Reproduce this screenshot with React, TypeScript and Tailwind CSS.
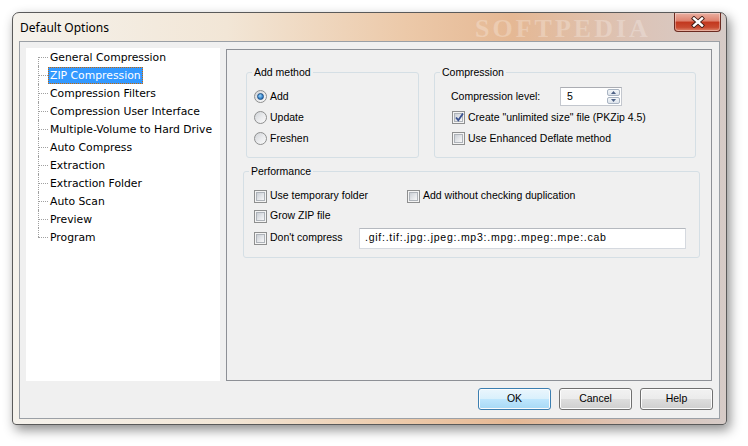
import React from "react";

const treeItems = [
  "General Compression",
  "ZIP Compression",
  "Compression Filters",
  "Compression User Interface",
  "Multiple-Volume to Hard Drive",
  "Auto Compress",
  "Extraction",
  "Extraction Folder",
  "Auto Scan",
  "Preview",
  "Program",
];

function CheckBox({ checked = false }: { checked?: boolean }) {
  return (
    <span className="relative w-[13px] h-[13px] shrink-0 border border-[#8e8f8f] bg-[#f4f4f4] flex items-center justify-center">
      <span className="w-[9px] h-[9px] border border-[#aeb3b9] bg-[linear-gradient(135deg,#cbcfd5_0%,#e4e6e9_55%,#f7f7f7_100%)]" />
      {checked && (
        <svg className="absolute left-[1px] top-[0px]" width="11" height="11" viewBox="0 0 11 11">
          <path d="M2 5.5 L4.3 8.2 L9 1.5" fill="none" stroke="#3a5291" strokeWidth="1.8" strokeLinejoin="miter" />
        </svg>
      )}
    </span>
  );
}

function Radio({ checked = false }: { checked?: boolean }) {
  return (
    <span className="w-[13px] h-[13px] shrink-0 rounded-full border border-[#8e8f8f] bg-[linear-gradient(135deg,#d0d3d7_0%,#ebecee_55%,#fafafa_100%)] flex items-center justify-center">
      {checked && (
        <span className="w-[7px] h-[7px] rounded-full border border-[#1d4f85] bg-[radial-gradient(circle_at_40%_35%,#9fd6f7_0%,#3c8ad0_55%,#1b5a9a_100%)]" />
      )}
    </span>
  );
}

function GroupBox({
  label,
  className,
  children,
}: {
  label: string;
  className: string;
  children: React.ReactNode;
}) {
  return (
    <div className={"relative border border-[#d5dfe5] rounded-[3px] shrink-0 " + className}>
      <span className="absolute top-[-8px] left-[5px] px-[2px] bg-[#f0f0f0] leading-[14px] text-black">
        {label}
      </span>
      {children}
    </div>
  );
}

function Btn({ label, primary = false }: { label: string; primary?: boolean }) {
  return (
    <div
      className={
        "w-[73px] h-[22px] rounded-[3px] border flex items-center justify-center text-black shadow-[inset_0_0_0_1px_#fcfcfc] " +
        (primary
          ? "border-[#3c7fb1] bg-[linear-gradient(to_bottom,#eaf6fd_0%,#d9f0fc_50%,#bee6fd_51%,#a7d9f5_100%)]"
          : "border-[#707070] bg-[linear-gradient(to_bottom,#f2f2f2_0%,#ebebeb_50%,#dddddd_51%,#cfcfcf_100%)]")
      }
    >
      {label}
    </div>
  );
}

export default function App() {
  return (
    <div
      className="w-[748px] h-[446px] bg-white pl-[12px] pt-[12px] overflow-hidden"
      style={{ fontFamily: '"Liberation Sans", Arial, sans-serif' }}
    >
      <div className="relative w-[715px] h-[413px] rounded-t-[7px] rounded-b-[4px] border border-[#5a5a5a] bg-[linear-gradient(to_right,#f5f2ec_0%,#f2e6d6_30%,#ecc9a9_55%,#e5b894_70%,#dcc4b8_88%,#d6cbc7_100%)] shadow-[3px_5px_12px_rgba(0,0,0,0.45)] flex flex-col">
        {/* title bar */}
        <div className="relative h-[28px] flex items-start shrink-0">
          <div
            className="self-center pl-[7px] pt-[1px] flex-1 text-[12px] text-black"
            style={{ fontFamily: '"Noto Sans", "Open Sans", sans-serif' }}
          >
            Default Options
          </div>
          <span
            className="absolute left-[462px] top-[3px] text-[26px] font-bold tracking-[3px] text-white/25 leading-none"
            style={{ fontFamily: '"Liberation Serif", serif' }}
          >
            SOFTPEDIA
          </span>
          <div className="relative w-[47px] h-[19px] mr-[5px] rounded-b-[4px] border border-t-0 border-[#6b2a20] bg-[linear-gradient(to_bottom,#eab0a2_0%,#de806c_45%,#c2371e_50%,#c94b31_80%,#e08a70_100%)] shadow-[inset_0_0_0_1px_rgba(255,255,255,0.35)] flex items-center justify-center">
            <svg width="16" height="12" viewBox="0 0 16 12">
              <path d="M4 2.5 L12 9.5 M12 2.5 L4 9.5" stroke="#3a1a14" strokeWidth="4.2" strokeLinecap="square" />
              <path d="M4 2.5 L12 9.5 M12 2.5 L4 9.5" stroke="#ffffff" strokeWidth="2.4" strokeLinecap="square" />
            </svg>
          </div>
        </div>

        {/* content */}
        <div className="mx-[6px] mb-[5px] flex-1 bg-[#f0f0f0] border border-[#9ba0a6] pl-[6px] pt-[6px] flex flex-col text-[10.5px] text-black">
          <div className="flex gap-[6px]">
            {/* tree */}
            <div
              className="w-[194px] h-[333px] bg-white flex flex-col text-[10.8px]"
              style={{ fontFamily: '"DejaVu Sans", "Liberation Sans", sans-serif' }}
            >
              {treeItems.map((item, i) => {
                const first = i === 0;
                const last = i === treeItems.length - 1;
                const selected = i === 1;
                return (
                  <div key={item} className="h-[18px] flex items-center shrink-0">
                    <div className="w-[12px] shrink-0" />
                    <div className="relative w-[10px] h-full shrink-0">
                      <span
                        className={
                          "absolute left-0 border-l border-dotted border-[#a0a0a0] " +
                          (first ? "top-[9px] bottom-0" : last ? "top-0 h-[9px]" : "top-0 bottom-0")
                        }
                      />
                      <span className="absolute left-0 top-[9px] w-[10px] border-t border-dotted border-[#a0a0a0]" />
                    </div>
                    <span
                      className={
                        "h-[17px] leading-[15px] px-[1px] border whitespace-nowrap " +
                        (selected
                          ? "bg-[#3399ff] text-white border-dotted border-[#cc6600]"
                          : "border-transparent")
                      }
                    >
                      {item}
                    </span>
                  </div>
                );
              })}
            </div>

            {/* right panel */}
            <div className="relative mt-[1px] w-[486px] h-[332px] border border-[#8d9096] pl-[16px] pt-[22px] flex flex-col">
              <div className="ml-[3px] flex gap-[15px]">
                <GroupBox label="Add method" className="w-[173px] h-[86px] pl-[7px] pt-[13px] flex flex-col">
                  {["Add", "Update", "Freshen"].map((r, i) => (
                    <div key={r} className="h-[21px] flex items-center gap-[3px]">
                      <Radio checked={i === 0} />
                      <span>{r}</span>
                    </div>
                  ))}
                </GroupBox>
                <GroupBox label="Compression" className="w-[262px] h-[86px] pl-[16px] pt-[13px] flex flex-col">
                  <div className="h-[21px] flex items-center">
                    <span className="w-[109px] shrink-0">Compression level:</span>
                    <div className="w-[62px] h-[19px] border border-[#c3c7ce] border-t-[#abadb3] bg-white flex items-center">
                      <span className="flex-1 pl-[6px]">5</span>
                      <div className="w-[15px] h-full flex flex-col gap-[1px] p-[1px]">
                        <div className="flex-1 rounded-[2px] border border-[#a9b4c2] bg-[linear-gradient(to_bottom,#f3f6f9,#dde4ec)] flex items-center justify-center">
                          <svg width="5" height="3" viewBox="0 0 5 3">
                            <path d="M0 3 L2.5 0 L5 3 Z" fill="#4d6185" />
                          </svg>
                        </div>
                        <div className="flex-1 rounded-[2px] border border-[#a9b4c2] bg-[linear-gradient(to_bottom,#f3f6f9,#dde4ec)] flex items-center justify-center">
                          <svg width="5" height="3" viewBox="0 0 5 3">
                            <path d="M0 0 L2.5 3 L5 0 Z" fill="#4d6185" />
                          </svg>
                        </div>
                      </div>
                    </div>
                  </div>
                  <div className="h-[21px] flex items-center gap-[3px] pl-[1px]">
                    <CheckBox checked />
                    <span className="whitespace-nowrap">Create "unlimited size" file (PKZip 4.5)</span>
                  </div>
                  <div className="h-[21px] flex items-center gap-[3px] pl-[1px]">
                    <CheckBox />
                    <span>Use Enhanced Deflate method</span>
                  </div>
                </GroupBox>
              </div>

              <GroupBox label="Performance" className="mt-[13px] w-[457px] h-[87px] pl-[10px] pt-[14px] flex flex-col">
                <div className="h-[20px] flex items-center">
                  <div className="w-[153px] flex items-center gap-[3px]">
                    <CheckBox />
                    <span>Use temporary folder</span>
                  </div>
                  <div className="flex items-center gap-[3px]">
                    <CheckBox />
                    <span>Add without checking duplication</span>
                  </div>
                </div>
                <div className="h-[20px] flex items-center gap-[3px]">
                  <CheckBox />
                  <span>Grow ZIP file</span>
                </div>
                <div className="h-[24px] flex items-center">
                  <div className="w-[105px] flex items-center gap-[3px]">
                    <CheckBox />
                    <span>Don't compress</span>
                  </div>
                  <div className="w-[327px] h-[21px] border border-[#d5d9df] border-t-[#b5b9bf] bg-white flex items-center pl-[5px] tracking-[0.75px]">
                    .gif:.tif:.jpg:.jpeg:.mp3:.mpg:.mpeg:.mpe:.cab
                  </div>
                </div>
              </GroupBox>
            </div>
          </div>

          <div className="mt-[7px] pr-[6px] flex justify-end gap-[8px]">
            <Btn label="OK" primary />
            <Btn label="Cancel" />
            <Btn label="Help" />
          </div>
        </div>
      </div>
    </div>
  );
}
